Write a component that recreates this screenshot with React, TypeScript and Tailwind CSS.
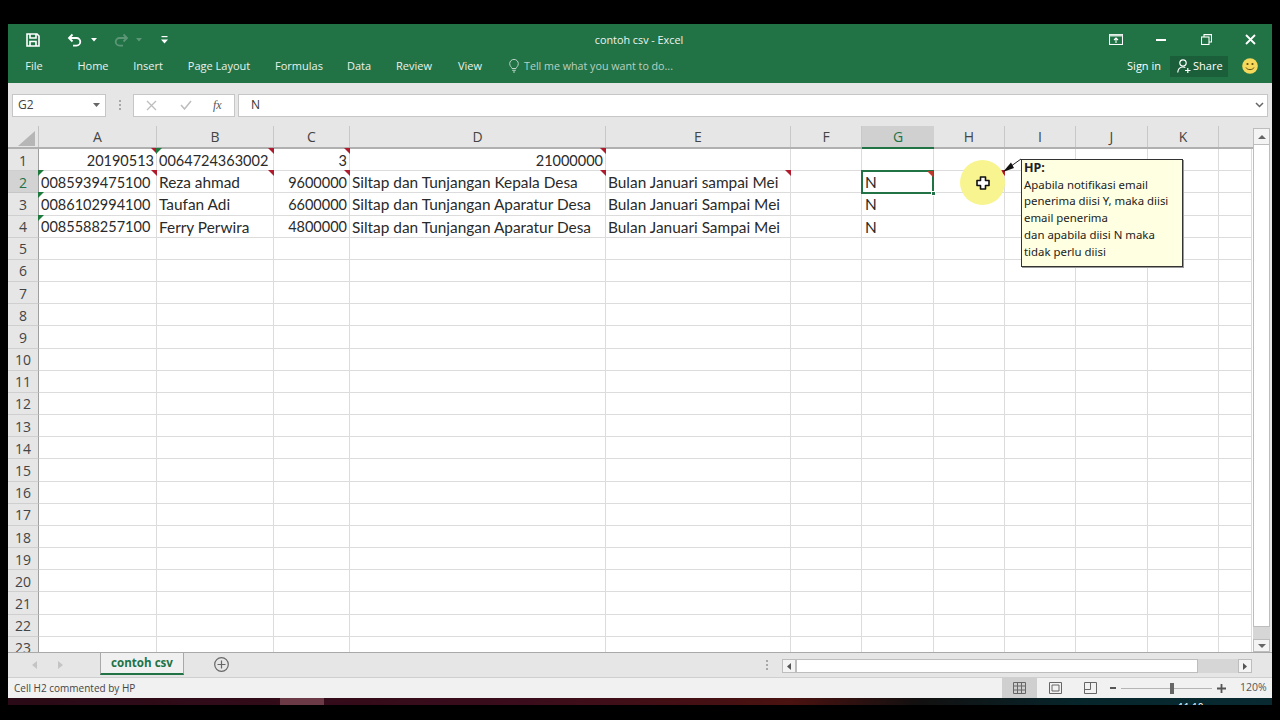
import { ReactNode } from "react";

const columns = [
  { name: "A", w: 118 },
  { name: "B", w: 117 },
  { name: "C", w: 76 },
  { name: "D", w: 256 },
  { name: "E", w: 185 },
  { name: "F", w: 71 },
  { name: "G", w: 72 },
  { name: "H", w: 71 },
  { name: "I", w: 71 },
  { name: "J", w: 72 },
  { name: "K", w: 71 },
  { name: "", w: 33 },
];

type Cell = { text?: string; right?: boolean; red?: boolean; green?: boolean };

const sheet: Record<number, Cell[]> = {
  1: [
    { text: "20190513", right: true, red: true },
    { text: "0064724363002", red: true, green: true },
    { text: "3", right: true, red: true },
    { text: "21000000", right: true, red: true },
  ],
  2: [
    { text: "0085939475100", red: true, green: true },
    { text: "Reza ahmad", red: true },
    { text: "9600000", right: true, red: true },
    { text: "Siltap dan Tunjangan Kepala Desa", red: true },
    { text: "Bulan Januari sampai Mei", red: true },
    {},
    { text: "N", red: true },
    { red: true },
  ],
  3: [
    { text: "0086102994100", green: true },
    { text: "Taufan Adi" },
    { text: "6600000", right: true },
    { text: "Siltap dan Tunjangan Aparatur Desa" },
    { text: "Bulan Januari Sampai Mei" },
    {},
    { text: "N" },
  ],
  4: [
    { text: "0085588257100", green: true },
    { text: "Ferry Perwira" },
    { text: "4800000", right: true },
    { text: "Siltap dan Tunjangan Aparatur Desa" },
    { text: "Bulan Januari Sampai Mei" },
    {},
    { text: "N" },
  ],
};

const rowNumbers = Array.from({ length: 23 }, (_, i) => i + 1);

function Corner({ color, side }: { color: string; side: "left" | "right" }) {
  return (
    <svg width="6" height="6" viewBox="0 0 6 6" className={side === "right" ? "absolute right-[-1px] top-[-1px] z-10" : "absolute left-[-1px] top-[-1px] z-10"}>
      <polygon points={side === "right" ? "0,0 6,0 6,6" : "0,0 6,0 0,6"} fill={color} />
    </svg>
  );
}

function Tab({ w, children }: { w: string; children: ReactNode }) {
  return <div className={`${w} text-center`}>{children}</div>;
}

function TitleBar() {
  return (
    <div className="relative flex h-[29px] items-center text-white">
      <svg width="16" height="16" viewBox="0 0 16 16" className="ml-[17px] mt-[1px]" fill="none" stroke="white" strokeWidth="1.6">
        <path d="M2 2h10l2 2v10H2z" />
        <path d="M5 2v4h6V2M5 14V9.5h6V14" />
      </svg>
      <svg width="16" height="14" viewBox="0 0 16 14" className="ml-[26px]" fill="none" stroke="white" strokeWidth="1.8">
        <path d="M5.5 1.5 2 5l3.5 3.5M2 5h7.5a3.8 3.8 0 0 1 0 7.6H6" />
      </svg>
      <svg width="6" height="4" viewBox="0 0 6 4" className="ml-[8px]" fill="#fff"><polygon points="0,0 6,0 3,3.5" /></svg>
      <svg width="16" height="14" viewBox="0 0 16 14" className="ml-[16px]" fill="none" stroke="#5d9577" strokeWidth="1.8">
        <path d="M10.5 1.5 14 5l-3.5 3.5M14 5H6.5a3.8 3.8 0 0 0 0 7.6H10" />
      </svg>
      <svg width="6" height="4" viewBox="0 0 6 4" className="ml-[7px]" fill="#5d9577"><polygon points="0,0 6,0 3,3.5" /></svg>
      <svg width="7" height="8" viewBox="0 0 7 8" className="ml-[19px]" fill="#fff">
        <rect x="0.5" y="0" width="6" height="1.2" />
        <polygon points="0,3.5 7,3.5 3.5,7.5" />
      </svg>
      <div className="absolute left-0 right-[2px] pt-[1px] text-center text-[10.8px] text-[#eef4f0]">contoh csv - Excel</div>
      <div className="ml-auto flex items-center pr-[16px]">
        <svg width="14" height="11" viewBox="0 0 14 11" fill="none" stroke="white" strokeWidth="1.1">
          <rect x="0.5" y="0.5" width="13" height="10" />
          <rect x="0.5" y="0.5" width="13" height="2" fill="#cfe0d6" stroke="none" />
          <path d="M7 9V4M5 6l2-2 2 2" />
        </svg>
        <svg width="10" height="2" viewBox="0 0 10 2" className="ml-[33px]" fill="white"><rect width="10" height="2" /></svg>
        <svg width="11" height="11" viewBox="0 0 11 11" className="ml-[35px]" fill="none" stroke="white" strokeWidth="1.1">
          <rect x="0.5" y="3" width="7.5" height="7.5" />
          <path d="M3 3V0.6h7.5v7.4H8" />
        </svg>
        <svg width="11" height="11" viewBox="0 0 11 11" className="ml-[33px]" fill="none" stroke="white" strokeWidth="1.8">
          <path d="M1 1l9 9M10 1l-9 9" />
        </svg>
      </div>
    </div>
  );
}

function RibbonTabs() {
  return (
    <div className="flex h-[29px] items-center pb-[5px] text-[11px] text-[#e9f1ec]">
      <Tab w="w-[52px]">File</Tab>
      <Tab w="w-[66px]">Home</Tab>
      <Tab w="w-[44px]">Insert</Tab>
      <Tab w="w-[98px]">Page Layout</Tab>
      <Tab w="w-[62px]">Formulas</Tab>
      <Tab w="w-[58px]">Data</Tab>
      <Tab w="w-[52px]">Review</Tab>
      <Tab w="w-[60px]">View</Tab>
      <svg width="10" height="14" viewBox="0 0 10 14" className="ml-[9px]" fill="none" stroke="#bcd3c6" strokeWidth="1">
        <path d="M3 9.5C2.6 8 .7 7.2.7 4.7a4.3 4.3 0 0 1 8.6 0c0 2.5-1.9 3.3-2.300 4.800zM3.200 11.300h3.600M4 13h2" />
      </svg>
      <span className="ml-[5px] text-[10.7px] text-[#b9d0c3]">Tell me what you want to do...</span>
      <span className="ml-auto text-white">Sign in</span>
      <div className="ml-[9px] flex h-[21px] w-[58px] items-center bg-[#1b5e3a] pl-[7px] text-white">
        <svg width="14" height="14" viewBox="0 0 14 14" fill="none" stroke="white" strokeWidth="1.2">
          <circle cx="6" cy="4" r="3.2" />
          <path d="M.7 13.5c.3-3.3 2-5.5 5.3-5.5 1 0 1.700.2 2.300.5M8 11.500h5.500M10.800 9v5" />
        </svg>
        <span className="ml-[2px]">Share</span>
      </div>
      <svg width="16" height="16" viewBox="0 0 16 16" className="ml-[14px] mr-[14px]">
        <circle cx="8" cy="8" r="7.800" fill="#f6d95a" />
        <circle cx="5.500" cy="6" r="1.100" fill="#5b4a10" />
        <circle cx="10.500" cy="6" r="1.100" fill="#5b4a10" />
        <path d="M4 9.500c1.200 2.800 6.800 2.800 8 0" fill="none" stroke="#5b4a10" strokeWidth="1" />
      </svg>
    </div>
  );
}

function FormulaBar() {
  return (
    <div className="flex h-[43px] items-center bg-[#e6e6e6] pl-[4px] pr-[4px] pt-[1px] text-[12px] text-[#444]">
      <div className="flex h-[23px] w-[94px] items-center justify-between border border-[#c6c6c6] bg-white pl-[5px] pr-[5px]">
        <span>G2</span>
        <svg width="7" height="4" viewBox="0 0 7 4" fill="#666"><polygon points="0,0 7,0 3.500,4" /></svg>
      </div>
      <div className="ml-[13px] mr-[12px] flex flex-col gap-[2px]">
        <span className="h-[2px] w-[2px] bg-[#a8a8a8]" />
        <span className="h-[2px] w-[2px] bg-[#a8a8a8]" />
        <span className="h-[2px] w-[2px] bg-[#a8a8a8]" />
      </div>
      <div className="flex h-[23px] w-[102px] items-center border border-[#c6c6c6] bg-white pl-[12px]">
        <svg width="11" height="11" viewBox="0 0 11 11" fill="none" stroke="#bdbdbd" strokeWidth="1.300"><path d="M1 1l9 9M10 1l-9 9" /></svg>
        <svg width="12" height="10" viewBox="0 0 12 10" className="ml-[23px]" fill="none" stroke="#bdbdbd" strokeWidth="1.500"><path d="M1 5l3.500 4L11 1" /></svg>
        <span className="ml-[21px] text-[12px] italic text-[#555] [font-family:'Liberation_Serif',serif]">fx</span>
      </div>
      <div className="ml-[3px] flex h-[23px] flex-1 items-center justify-between border border-[#c6c6c6] bg-white pl-[12px] pr-[3px]">
        <span className="text-[#333]">N</span>
        <svg width="9" height="6" viewBox="0 0 9 6" fill="none" stroke="#666" strokeWidth="1.500"><path d="M1 1l3.500 3.500L8 1" /></svg>
      </div>
    </div>
  );
}

function ColumnHeaders() {
  return (
    <div className="flex h-[23px] shrink-0 border-b-2 border-[#b0b0b0] bg-[#e6e6e6]">
      <div className="relative w-[31px] shrink-0 border-r border-[#c2c2c2]">
        <svg width="17" height="15" viewBox="0 0 17 15" className="absolute bottom-[1px] right-[3px]" fill="#b6b6b6"><polygon points="17,0 17,15 0,15" /></svg>
      </div>
      {columns.map((c) => (
        <div
          key={c.name || "rest"}
          style={{ width: c.w }}
          className={
            c.name === "G"
              ? "-mb-[2px] flex shrink-0 items-center justify-center border-b-2 border-[#217346] bg-[#d0d0d0] text-[14px] text-[#217346]"
              : c.name
              ? "flex shrink-0 items-center justify-center border-r border-[#c8c8c8] text-[14px] text-[#444]"
              : "shrink-0"
          }
        >
          {c.name}
        </div>
      ))}
    </div>
  );
}

function Row({ n }: { n: number }) {
  const cells = sheet[n] || [];
  return (
    <div className="flex h-[22.18px] shrink-0">
      <div className={n === 2 ? "flex w-[31px] shrink-0 items-center justify-center border-r border-[#9f9f9f] border-b border-b-[#c6c6c6] bg-[#d3d3d3] pt-[1px] text-[14px] text-[#217346]" : "flex w-[31px] shrink-0 items-center justify-center border-r border-[#9f9f9f] border-b border-b-[#cfcfcf] bg-[#e6e6e6] pt-[1px] text-[14px] text-[#444]"}>
        {n}
      </div>
      {columns.map((c, i) => {
        const cell = cells[i] || {};
        const selected = n === 2 && c.name === "G";
        const numeric = /^\d+$/.test(cell.text || "");
        return (
          <div
            key={i}
            style={{ width: c.w }}
            className={`relative flex shrink-0 items-center whitespace-nowrap border-b border-r border-[#dcdcdc] pt-[2px] text-[#2a2a2a] [font-family:'Lato',sans-serif] ${numeric ? "text-[14.5px]" : "text-[15.4px]"} ${cell.right ? "justify-end pr-[2px]" : "pl-[2px]"}`}
          >
            {cell.green && <Corner color="#1e7a3c" side="left" />}
            {cell.red && !selected && <Corner color="#b01c2e" side="right" />}
            {selected && (
              <div className="absolute -left-[1px] -top-[1px] bottom-[-2px] right-[-1px] z-10 border-2 border-[#217346]">
                <Corner color="#c0392b" side="right" />
                <span className="absolute bottom-[-4px] right-[-4px] h-[5px] w-[5px] border border-white bg-[#217346]" />
              </div>
            )}
            <span className={selected ? "relative z-20 pl-[1px]" : c.name === "G" ? "pl-[1px]" : ""}>{cell.text}</span>
          </div>
        );
      })}
    </div>
  );
}

function Comment() {
  return (
    <>
      <svg width="22" height="18" viewBox="0 0 22 18" className="absolute left-[993px] top-[31px] z-30">
        <path d="M20 2 L6 12" stroke="#222" strokeWidth="1" />
        <polygon points="2,15 10,5.500 13,11" fill="#111" />
      </svg>
      <div className="absolute left-[1013px] top-[33px] z-30 h-[108px] w-[162px] border border-[#333] bg-[#ffffe1] pl-[2px] text-[11.4px] leading-[16.7px] text-[#222] shadow-[1px_1px_0_#999] [font-family:'Noto_Sans',sans-serif]">
        <div className="text-[12.5px] font-bold">HP:</div>
        <div>Apabila notifikasi email</div>
        <div>penerima diisi Y, maka diisi</div>
        <div>email penerima</div>
        <div>dan apabila diisi N maka</div>
        <div>tidak perlu diisi</div>
      </div>
    </>
  );
}

function MouseHighlight() {
  return (
    <div className="absolute left-[952px] top-[34px] z-20 flex h-[45px] w-[45px] items-center justify-center rounded-full bg-[#f8f590]">
      <svg width="14" height="14" viewBox="0 0 14 14">
        <path d="M4.500 1h5v3.500H13v5H9.500V13h-5V9.500H1v-5h3.500z" fill="white" stroke="#111" strokeWidth="1.600" strokeLinejoin="round" />
      </svg>
    </div>
  );
}

function VerticalScroll() {
  return (
    <div className="flex w-[19px] shrink-0 flex-col bg-[#e6e6e6] pr-[2px] pt-[2px]">
      <div className="flex h-[17px] items-center justify-center border border-[#bdbdbd] bg-[#f4f4f4]">
        <svg width="8" height="4" viewBox="0 0 8 4" fill="#666"><polygon points="4,0 8,4 0,4" /></svg>
      </div>
      <div className="flex-1 border-x border-b border-[#bdbdbd] bg-white" />
      <div className="h-[12px] bg-[#d6d6d6]" />
      <div className="flex h-[13px] items-center justify-center border border-[#bdbdbd] bg-[#f4f4f4]">
        <svg width="8" height="4" viewBox="0 0 8 4" fill="#666"><polygon points="0,0 8,0 4,4" /></svg>
      </div>
    </div>
  );
}

function SheetTabs() {
  return (
    <div className="flex h-[25px] shrink-0 border-t border-[#a9a9a9] bg-[#e6e6e6]">
      <svg width="5" height="8" viewBox="0 0 5 8" className="ml-[24px] mt-[8px]" fill="#c4c4c4"><polygon points="5,0 5,8 0,4" /></svg>
      <svg width="5" height="8" viewBox="0 0 5 8" className="ml-[21px] mt-[8px]" fill="#c4c4c4"><polygon points="0,0 0,8 5,4" /></svg>
      <div className="ml-[37px] flex h-[22px] w-[84px] items-center justify-center border-x border-b-2 border-x-[#a9a9a9] border-b-[#217346] bg-[#f0f0f0] text-[11.6px] font-bold text-[#217346]">
        contoh csv
      </div>
      <svg width="15" height="15" viewBox="0 0 15 15" className="ml-[30px] mt-[4px]" fill="none" stroke="#666" strokeWidth="1.200">
        <circle cx="7.500" cy="7.500" r="6.800" />
        <path d="M7.500 3.500v8M3.500 7.500h8" />
      </svg>
      <div className="ml-[537px] mt-[7px] flex flex-col gap-[2px]">
        <span className="h-[2px] w-[2px] bg-[#a8a8a8]" />
        <span className="h-[2px] w-[2px] bg-[#a8a8a8]" />
        <span className="h-[2px] w-[2px] bg-[#a8a8a8]" />
      </div>
      <div className="ml-[14px] mt-[6px] flex h-[14px] w-[470px]">
        <div className="flex w-[14px] items-center justify-center border border-[#bdbdbd] bg-[#f4f4f4]">
          <svg width="4" height="7" viewBox="0 0 4 7" fill="#555"><polygon points="4,0 4,7 0,3.500" /></svg>
        </div>
        <div className="w-[402px] border border-[#bdbdbd] bg-white" />
        <div className="flex-1 bg-[#d6d6d6]" />
        <div className="flex w-[14px] items-center justify-center border border-[#bdbdbd] bg-[#f4f4f4]">
          <svg width="4" height="7" viewBox="0 0 4 7" fill="#555"><polygon points="0,0 0,7 4,3.500" /></svg>
        </div>
      </div>
    </div>
  );
}

function StatusBar() {
  return (
    <div className="flex h-[21px] shrink-0 items-center border-t border-[#cfcfcf] bg-[#f1f1f1] text-[10px] text-[#444]">
      <span className="pl-[6px]">Cell H2 commented by HP</span>
      <div className="ml-auto flex h-full w-[35px] items-center justify-center bg-[#cfcfcf]">
        <svg width="13" height="12" viewBox="0 0 13 12" fill="none" stroke="#666" strokeWidth="1">
          <path d="M.5.5h12v11H.5zM.5 4h12M.5 8h12M4.500.5v11M8.500.5v11" />
        </svg>
      </div>
      <svg width="13" height="12" viewBox="0 0 13 12" className="ml-[12px]" fill="none" stroke="#666" strokeWidth="1">
        <path d="M.5.5h12v11H.5zM3 3h7v6H3z" />
      </svg>
      <svg width="13" height="12" viewBox="0 0 13 12" className="ml-[22px]" fill="none" stroke="#666" strokeWidth="1">
        <path d="M.5.5h12v11H.5zM.5 7.500h6V.5" />
      </svg>
      <span className="ml-[13px] h-[2px] w-[6px] bg-[#555]" />
      <div className="relative mx-[5px] h-[1px] w-[91px] bg-[#b5b5b5]">
        <span className="absolute left-[49px] top-[-5px] h-[11px] w-[4px] bg-[#666]" />
      </div>
      <svg width="9" height="9" viewBox="0 0 9 9" fill="#555"><path d="M3.600 0h1.800v3.600H9v1.800H5.400V9H3.600V5.400H0V3.600h3.600z" /></svg>
      <span className="ml-[14px] w-[32px] text-[10.5px] text-[#555]">120%</span>
    </div>
  );
}

export default function App() {
  return (
    <div className="h-[720px] w-[1280px] overflow-hidden bg-black [font-family:'Open_Sans',sans-serif]">
      <div className="ml-[8px] mt-[24px] flex h-[674px] w-[1264px] flex-col">
        <div className="shrink-0 bg-[#217346] pt-[1px]">
          <TitleBar />
          <RibbonTabs />
        </div>
        <FormulaBar />
        <div className="flex min-h-0 flex-1">
          <div className="relative min-w-0 flex-1 overflow-hidden bg-white">
            <ColumnHeaders />
            {rowNumbers.map((n) => (
              <Row key={n} n={n} />
            ))}
            <MouseHighlight />
            <Comment />
          </div>
          <VerticalScroll />
        </div>
        <SheetTabs />
        <StatusBar />
      </div>
      <div className="relative ml-[8px] h-[7px] w-[1264px] overflow-hidden bg-[linear-gradient(90deg,#2a0a16_0%,#3a0c1c_40%,#4a1210_62%,#121010_72%,#06262c_85%,#082a30_100%)]">
        <div className="absolute left-[272px] top-0 h-full w-[44px] bg-[#6b3a46]" />
        <span className="absolute left-[1170px] top-[4px] text-[10px] leading-none text-white">11:10</span>
      </div>
    </div>
  );
}
